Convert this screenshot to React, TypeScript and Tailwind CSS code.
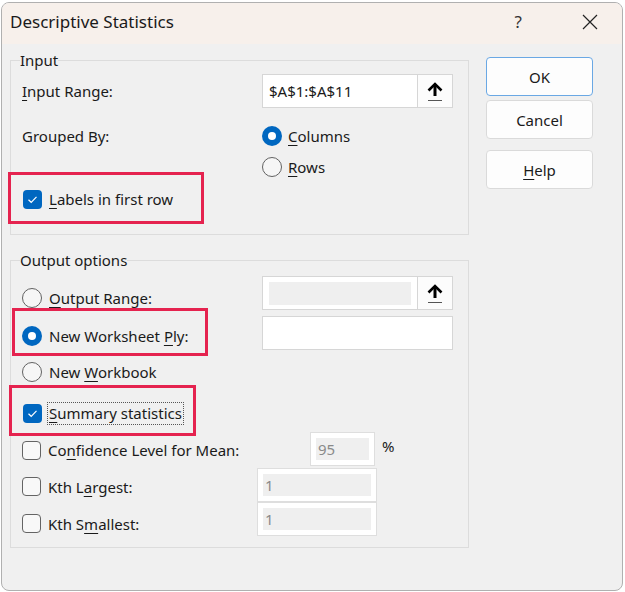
import React from 'react';

const RED = 'border-[#e5234f]';

function Radio({ checked }: { checked?: boolean }) {
  if (checked) {
    return (
      <span className="flex h-[20px] w-[20px] shrink-0 items-center justify-center rounded-full bg-[#0067c0]">
        <span className="h-[8px] w-[8px] rounded-full bg-white" />
      </span>
    );
  }
  return <span className="h-[20px] w-[20px] shrink-0 rounded-full border border-[#626262] bg-[#f6f6f6]" />;
}

function Checkbox({ checked }: { checked?: boolean }) {
  if (checked) {
    return (
      <span className="flex h-[19px] w-[19px] shrink-0 items-center justify-center rounded-[4px] bg-[#0067c0]">
        <svg width="11" height="9" viewBox="0 0 11 9" fill="none">
          <path d="M1.5 4.8 L4.2 7.3 L9.5 1.8" stroke="white" strokeWidth="1.2" />
        </svg>
      </span>
    );
  }
  return <span className="h-[19px] w-[19px] shrink-0 rounded-[4px] border border-[#646464] bg-[#f8f8f8]" />;
}

function UpArrow() {
  return (
    <svg width="18" height="22" viewBox="0 0 18 22" fill="none">
      <path d="M9 5 V16" stroke="black" strokeWidth="3" />
      <path d="M2.5 10.5 L9 4 L15.5 10.5" stroke="black" strokeWidth="2.6" />
      <path d="M2 20.5 H16" stroke="#555" strokeWidth="1" />
    </svg>
  );
}

// underline the accelerator letter, like Windows does
function U({ children }: { children: React.ReactNode }) {
  return <u className="decoration-1 underline-offset-[3px]">{children}</u>;
}

function RefField({ value, disabled }: { value?: string; disabled?: boolean }) {
  return (
    <div className="flex h-[34px] w-[191px] shrink-0 border border-[#d6d6d6] bg-white">
      <div className="flex flex-1 items-center px-[6px]">
        {disabled ? <div className="h-[23px] w-full bg-[#efefef]" /> : <span>{value}</span>}
      </div>
      <div className="flex w-[35px] items-center justify-center border-l border-[#d6d6d6] bg-[#fcfcfc]">
        <UpArrow />
      </div>
    </div>
  );
}

function NumField({ value, width }: { value: string; width: string }) {
  return (
    <div className={`flex h-[34px] shrink-0 border border-[#dedede] bg-white px-[5px] py-[5px] ${width}`}>
      <div className="flex flex-1 items-center bg-[#efefef] pl-[2px] text-[#8a8a8a]">{value}</div>
    </div>
  );
}

function DlgButton({ children, primary }: { children: React.ReactNode; primary?: boolean }) {
  return (
    <button
      className={`flex h-[39px] w-[107px] items-center justify-center rounded-[4px] border bg-[#fdfdfd] ${
        primary ? 'border-[#6aa8e4]' : 'border-[#dadada]'
      }`}
    >
      {children}
    </button>
  );
}

export default function App() {
  return (
    <div className="h-[592px] w-[625px] bg-white pl-[1px] pt-[2px] font-['Noto_Sans',sans-serif] text-[15px] leading-[20px] text-[#1a1a1a]">
      <div className="h-[589px] w-[622px] overflow-hidden rounded-[8px] border border-[#b0b0b0] bg-[#f0f0f0]">
        {/* Title bar */}
        <div className="flex h-[41px] items-center bg-[#f7f0eb] pb-[3px] pl-[8px] pr-[24px]">
          <span className="text-[17px]">Descriptive Statistics</span>
          <span className="ml-auto mr-[60px] text-[17px] text-[#333]">?</span>
          <svg width="16" height="16" viewBox="0 0 16 16" fill="none">
            <path d="M1 1 L15 15 M15 1 L1 15" stroke="#222" strokeWidth="1.2" />
          </svg>
        </div>

        <div className="flex pl-[8px]">
          {/* Left column */}
          <div className="w-[459px] pt-[6px]">
            <fieldset className="m-0 border border-[#dcdcdc] pb-[10px] pl-[11px]">
              <legend className="-ml-[2px] px-0 leading-[20px]">Input</legend>
              <div className="mt-[4px] flex h-[34px] items-center">
                <div className="w-[240px]">
                  <U>I</U>nput Range:
                </div>
                <RefField value="$A$1:$A$11" />
              </div>
              <div className="mt-[14px] flex">
                <div className="w-[240px]">
                  <div className="flex h-[28px] items-center">Grouped By:</div>
                  <div className={`-ml-[14px] mt-[22px] flex h-[52px] w-[196px] items-center gap-[7px] border-[3px] ${RED} pl-[12px] pt-[2px]`}>
                    <Checkbox checked />
                    <span>
                      <U>L</U>abels in first row
                    </span>
                  </div>
                </div>
                <div>
                  <div className="flex h-[28px] items-center gap-[6px]">
                    <Radio checked />
                    <span>
                      <U>C</U>olumns
                    </span>
                  </div>
                  <div className="mt-[3px] flex h-[28px] items-center gap-[6px]">
                    <Radio />
                    <span>
                      <U>R</U>ows
                    </span>
                  </div>
                </div>
              </div>
            </fieldset>

            <fieldset className="m-0 mt-[15px] border border-[#dcdcdc] pb-[11px] pl-[11px]">
              <legend className="-ml-[2px] px-0 leading-[20px]">Output options</legend>
              <div className="mt-[6px] flex h-[34px] items-start">
                <div className="mt-[12px] flex h-[20px] w-[240px] items-center gap-[7px]">
                  <Radio />
                  <span>
                    <U>O</U>utput Range:
                  </span>
                </div>
                <RefField disabled />
              </div>
              <div className="-mt-[2px] flex h-[48px] items-start">
                <div className="w-[240px]">
                  <div className={`-ml-[10px] flex h-[48px] w-[196px] items-center gap-[7px] border-[3px] ${RED} pl-[7px] pt-[8px]`}>
                    <Radio checked />
                    <span>
                      New Worksheet <U>P</U>ly:
                    </span>
                  </div>
                </div>
                <div className="mt-[8px] h-[34px] w-[191px] border border-[#d6d6d6] bg-white" />
              </div>
              <div className="mt-[6px] flex h-[20px] items-center gap-[7px]">
                <Radio />
                <span>
                  New <U>W</U>orkbook
                </span>
              </div>
              <div className={`-ml-[13px] mt-[3px] flex h-[51px] w-[187px] items-center gap-[5px] border-[3px] ${RED} pl-[11px] pt-[5px]`}>
                <Checkbox checked />
                <span className="border border-dotted border-[#555] px-[1px] leading-[21px]">
                  <U>S</U>ummary statistics
                </span>
              </div>
              <div className="-mt-[4px] flex h-[34px] items-center">
                <div className="flex w-[288px] items-center gap-[7px] pt-[2px]">
                  <Checkbox />
                  <span>
                    Co<U>n</U>fidence Level for Mean:
                  </span>
                </div>
                <NumField value="95" width="w-[65px]" />
                <span className="mb-[6px] ml-[7px]">%</span>
              </div>
              <div className="mt-[2px] flex h-[34px] items-center">
                <div className="flex w-[235px] items-center gap-[7px] pt-[3px]">
                  <Checkbox />
                  <span>
                    Kth L<U>a</U>rgest:
                  </span>
                </div>
                <NumField value="1" width="w-[120px]" />
              </div>
              <div className="flex h-[34px] items-center">
                <div className="flex w-[235px] items-center gap-[7px] pt-[9px]">
                  <Checkbox />
                  <span>
                    Kth S<U>m</U>allest:
                  </span>
                </div>
                <NumField value="1" width="w-[120px]" />
              </div>
            </fieldset>
          </div>

          {/* Buttons */}
          <div className="ml-[17px] flex flex-col pt-[13px]">
            <DlgButton primary>OK</DlgButton>
            <div className="mt-[4px]">
              <DlgButton>Cancel</DlgButton>
            </div>
            <div className="mt-[11px]">
              <DlgButton>
                <span>
                  <U>H</U>elp
                </span>
              </DlgButton>
            </div>
          </div>
        </div>
      </div>
    </div>
  );
}
